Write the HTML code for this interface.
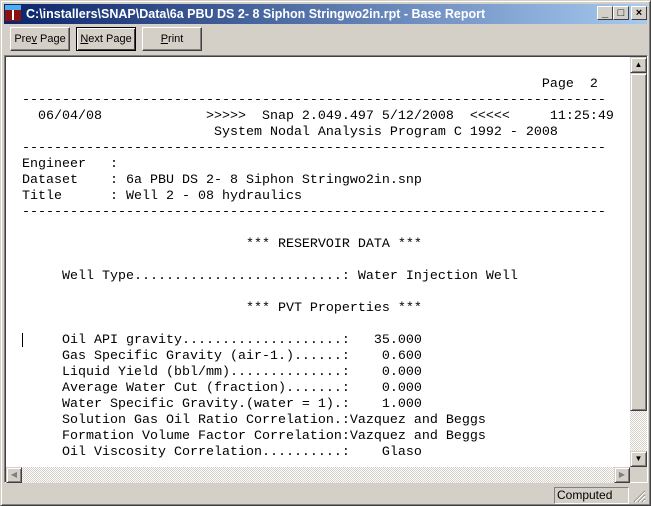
<!DOCTYPE html>
<html><head><style>
*{margin:0;padding:0;box-sizing:border-box}
body{width:651px;height:506px;background:#d4d0c8;position:relative;overflow:hidden;font-family:Tahoma,"Liberation Sans",sans-serif;font-size:11px}
.win{position:absolute;left:0;top:0;width:651px;height:506px;border:1px solid;border-color:#d4d0c8 #404040 #404040 #d4d0c8;box-shadow:inset 1px 1px #fff,inset -1px -1px #808080}
.title{position:absolute;left:4px;top:4px;width:643px;height:20px;background:linear-gradient(90deg,#0a246a,#a6caf0);color:#fff;font-weight:bold;font-size:12.5px;line-height:20px;padding-left:22px;white-space:nowrap}
.ico{position:absolute;left:5px;top:5px;width:16px;height:16px;background:#8b1010}
.ico:before{content:"";position:absolute;left:0;top:0;width:16px;height:5px;background:#4ab0f0}
.ico:after{content:"";position:absolute;left:7px;top:5px;width:2px;height:10px;background:#fff}
.tb{position:absolute;top:6px;width:16px;height:14px;background:#d4d0c8;border:1px solid;border-color:#fff #404040 #404040 #fff;color:#000;font-size:11px;line-height:12px;text-align:center;font-weight:bold}
.btn{position:absolute;top:27px;height:24px;width:60px;background:#d4d0c8;border:1px solid;border-color:#fff #404040 #404040 #fff;box-shadow:inset -1px -1px #808080;text-align:center;line-height:22px;font-size:11px;color:#000;white-space:nowrap}
.frame{position:absolute;left:4px;top:55px;width:644px;height:428px;border:1px solid;border-color:#808080 #fff #fff #808080;box-shadow:inset 1px 1px #404040}
.content{position:absolute;left:6px;top:57px;width:624px;height:410px;background:#fff;overflow:hidden}
pre{position:absolute;left:16px;top:20px;font-family:"Liberation Mono","Courier New",monospace;font-size:13.33px;line-height:16px;color:#000}
.hatch{background-color:#eee;background-image:repeating-conic-gradient(#d4d0c8 0 25%,#fff 0 50%);background-size:2px 2px}
.sb{position:absolute;background:#d4d0c8;border:1px solid;border-color:#d4d0c8 #404040 #404040 #d4d0c8;box-shadow:inset 1px 1px #fff,inset -1px -1px #808080}
.status{position:absolute;left:554px;top:487px;width:75px;height:17px;border:1px solid;border-color:#808080 #fff #fff #808080;font-size:12px;line-height:15px;padding-left:2px;color:#000}
</style></head><body>
<div class="win"></div>
<div class="title">C:\installers\SNAP\Data\6a PBU DS 2- 8 Siphon Stringwo2in.rpt - Base Report</div>
<div class="ico"></div>
<div class="tb" style="left:597px">_</div>
<div class="tb" style="left:613px">□</div>
<div class="tb" style="left:631px">×</div>
<div class="btn" style="left:10px">Pre<u>v</u> Page</div>
<div class="btn" style="left:76px;border:1px solid #000;box-shadow:inset 1px 1px #fff,inset -1px -1px #404040"><u>N</u>ext Page</div>
<div class="btn" style="left:142px"><u>P</u>rint</div>
<div class="frame"></div>
<div class="content">
<pre>                                                                 Page  2
-------------------------------------------------------------------------
  06/04/08             &gt;&gt;&gt;&gt;&gt;  Snap 2.049.497 5/12/2008  &lt;&lt;&lt;&lt;&lt;     11:25:49
                        System Nodal Analysis Program C 1992 - 2008
-------------------------------------------------------------------------
Engineer   :
Dataset    : 6a PBU DS 2- 8 Siphon Stringwo2in.snp
Title      : Well 2 - 08 hydraulics
-------------------------------------------------------------------------

                            *** RESERVOIR DATA ***

     Well Type..........................: Water Injection Well

                            *** PVT Properties ***

     Oil API gravity....................:   35.000
     Gas Specific Gravity (air-1.)......:    0.600
     Liquid Yield (bbl/mm)..............:    0.000
     Average Water Cut (fraction).......:    0.000
     Water Specific Gravity.(water = 1).:    1.000
     Solution Gas Oil Ratio Correlation.:Vazquez and Beggs
     Formation Volume Factor Correlation:Vazquez and Beggs
     Oil Viscosity Correlation..........:    Glaso</pre>
<div style="position:absolute;left:16px;top:276px;width:1px;height:14px;background:#000"></div>
</div>
<div class="hatch" style="position:absolute;left:630px;top:57px;width:17px;height:410px"></div>
<div class="sb" style="left:630px;top:57px;width:17px;height:16px;font-size:8px;text-align:center;line-height:13px">▲</div>
<div class="sb" style="left:630px;top:73px;width:17px;height:338px"></div>
<div class="sb" style="left:630px;top:451px;width:17px;height:16px;font-size:8px;text-align:center;line-height:14px">▼</div>
<div class="hatch" style="position:absolute;left:6px;top:467px;width:624px;height:16px"></div>
<div class="sb" style="left:6px;top:467px;width:16px;height:16px;font-size:8px;text-align:center;line-height:14px;color:#808080">◀</div>
<div class="sb" style="left:614px;top:467px;width:16px;height:16px;font-size:8px;text-align:center;line-height:14px;color:#808080">▶</div>
<div class="status">Computed</div>
<svg style="position:absolute;left:633px;top:490px" width="13" height="13"><path d="M12 1L1 12M12 5L5 12M12 9L9 12" stroke="#808080" stroke-width="1.2"/><path d="M12 2L2 12M12 6L6 12M12 10L10 12" stroke="#fff" stroke-width="1"/></svg>
</body></html>
